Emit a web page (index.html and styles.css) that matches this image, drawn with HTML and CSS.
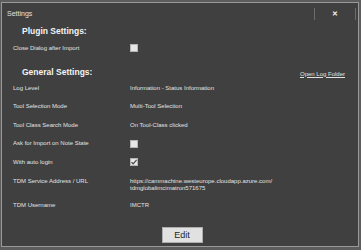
FILE: index.html
```html
<!DOCTYPE html>
<html lang="en">
<head>
    <meta charset="UTF-8">
    <title>Settings</title>
    <link rel="stylesheet" href="styles.css">
</head>
<body>
    <div class="window">
        <div class="titlebar">
            <span class="title">Settings</span>
            <div class="title-controls">
                <span class="sep"></span>
                <span class="close">&#x2715;</span>
                <span class="sep"></span>
            </div>
        </div>

        <div class="content">
            <div class="section-head first">
                <h2>Plugin Settings:</h2>
            </div>
            <div class="row row-plugin">
                <span class="label">Close Dialog after Import</span>
                <span class="value"><span class="checkbox"></span></span>
            </div>

            <div class="section-head general">
                <h2>General Settings:</h2>
                <a class="link" href="#">Open Log Folder</a>
            </div>
            <div class="row">
                <span class="label">Log Level</span>
                <span class="value">Information - Status Information</span>
            </div>
            <div class="row">
                <span class="label">Tool Selection Mode</span>
                <span class="value">Multi-Tool Selection</span>
            </div>
            <div class="row">
                <span class="label">Tool Class Search Mode</span>
                <span class="value">On Tool-Class clicked</span>
            </div>
            <div class="row">
                <span class="label">Ask for Import on Note State</span>
                <span class="value"><span class="checkbox"></span></span>
            </div>
            <div class="row">
                <span class="label">With auto login</span>
                <span class="value">
                    <span class="checkbox checked">
                        <svg width="8" height="8" viewBox="0 0 8 8"><path d="M1.5 4.2 L3.2 5.8 L6.6 1.8" fill="none" stroke="#4a4a4a" stroke-width="1.2"/></svg>
                    </span>
                </span>
            </div>
            <div class="row row-url">
                <span class="label">TDM Service Address / URL</span>
                <span class="value">https://cammachine.westeurope.cloudapp.azure.com/<br>tdmglobalimcimatron571675</span>
            </div>
            <div class="row">
                <span class="label">TDM Username</span>
                <span class="value">IMCTR</span>
            </div>
        </div>

        <div class="footer">
            <button class="btn">Edit</button>
        </div>
    </div>
</body>
</html>
```

FILE: styles.css
```css
:root {
    --background: #404040;
    --frame: #5c5c5c;
    --frame-light: #9a9a9a;
    --text: #e2e2e2;
    --heading: #f4f4f4;
}

* {
    margin: 0;
    padding: 0;
    box-sizing: border-box;
}

body {
    width: 361px;
    height: 250px;
    overflow: hidden;
    background: var(--frame);
    font-family: 'Liberation Sans', Arial, sans-serif;
    color: var(--text);
}

.window {
    width: 358px;
    height: 245px;
    margin: 2px 0 0 1px;
    border: 1px solid var(--frame-light);
    background: var(--background);
    display: flex;
    flex-direction: column;
}

.titlebar {
    height: 21px;
    display: flex;
    align-items: center;
    justify-content: space-between;
    padding-left: 5px;
}

.title {
    font-size: 7px;
    color: var(--text);
}

.title-controls {
    display: flex;
    align-items: center;
    height: 100%;
    margin-right: 2px;
}

.sep {
    width: 1px;
    height: 12px;
    background: #6c6c6c;
}

.close {
    width: 40px;
    text-align: center;
    font-size: 7px;
    font-weight: bold;
    color: #f2f2f2;
    line-height: 12px;
}

.content {
    padding: 0 13px 0 11px;
}

.section-head {
    display: flex;
    align-items: center;
    justify-content: space-between;
    height: 14px;
}

.section-head h2 {
    font-size: 8.5px;
    font-weight: bold;
    color: var(--heading);
    padding-left: 9px;
}

.section-head.general {
    height: 21px;
    padding-top: 6px;
}

.link {
    font-size: 6px;
    color: var(--text);
    text-decoration: underline;
    margin-top: 4px;
}

.row {
    display: grid;
    grid-template-columns: 117px 1fr;
    align-items: center;
    height: 18.5px;
    font-size: 6px;
    line-height: 7px;
}

.row-plugin {
    height: 20px;
}

.row.row-url {
    align-items: start;
    height: 25px;
    padding-top: 6px;
}

.checkbox {
    display: block;
    width: 8px;
    height: 8px;
    background: #e6e6e6;
    border: 1px solid #b4b4b4;
}

.checkbox svg {
    display: block;
    margin: -1px 0 0 -1px;
}

.footer {
    display: flex;
    justify-content: center;
    padding: 12px 0 0 4px;
}

.btn {
    width: 41px;
    height: 16px;
    background: #e1e1e1;
    border: 1px solid #adadad;
    font-family: 'Liberation Sans', Arial, sans-serif;
    font-size: 9px;
    color: #1e1e1e;
}
```
